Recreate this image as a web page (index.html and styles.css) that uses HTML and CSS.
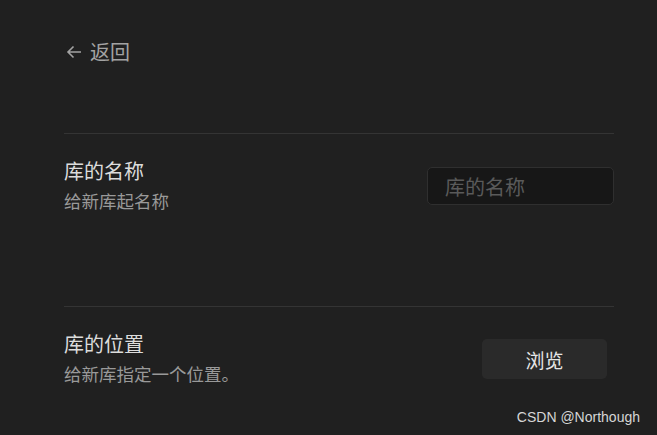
FILE: index.html
```html
<!DOCTYPE html>
<html lang="zh-CN">
<head>
<meta charset="utf-8"/>
<meta content="width=device-width, initial-scale=1.0" name="viewport"/>
<title>新建库</title>
<link rel="stylesheet" href="styles.css">
</head>
<body>
<main class="page">
<a class="back" href="#"><svg class="arrow" width="16" height="14" viewBox="0 0 16 14"><path d="M15 7H2M7.5 1.5L2 7l5.5 5.5" fill="none" stroke="currentColor" stroke-width="1.6"/></svg>返回</a>
<div class="settings">
<div class="setting-item">
<div class="info">
<div class="name">库的名称</div>
<div class="desc">给新库起名称</div>
</div>
<input class="text-input" placeholder="库的名称" type="text"/>
</div>
<div class="setting-item">
<div class="info">
<div class="name">库的位置</div>
<div class="desc">给新库指定一个位置。</div>
</div>
<button class="btn">浏览</button>
</div>
</div>
</main>
<div class="watermark">CSDN @Northough</div>
</body>
</html>
```

FILE: styles.css
```css
* {
  box-sizing: border-box;
}

body {
  margin: 0;
  padding: 0;
  background: #202020;
  color: #dadada;
  font-family: "Noto Sans CJK SC", "Noto Sans", sans-serif;
  width: 657px;
  height: 435px;
  overflow: hidden;
  position: relative;
}

.page {
  padding: 37px 43px 0 64px;
}

.back {
  display: inline-flex;
  align-items: center;
  gap: 8px;
  color: #a3a3a3;
  text-decoration: none;
  font-size: 20px;
  line-height: 30px;
}

.back .arrow {
  margin-left: 2px;
}

.settings {
  margin-top: 66px;
  display: flex;
  flex-direction: column;
  gap: 68px;
}

.setting-item {
  border-top: 1px solid #343434;
  padding: 22px 0;
  display: flex;
  justify-content: space-between;
  align-items: center;
}

.name {
  font-size: 20px;
  line-height: 30px;
  color: #dcdcdc;
}

.desc {
  font-size: 17.5px;
  line-height: 30px;
  color: #999;
}

.text-input {
  width: 187px;
  height: 38px;
  background: #171717;
  border: 1px solid #2f2f2f;
  border-radius: 5px;
  padding: 0 17px;
  font-family: inherit;
  font-size: 20px;
  color: #dadada;
  outline: none;
}

.text-input::placeholder {
  color: #5a5a5a;
}

.btn {
  width: 125px;
  height: 40px;
  margin-right: 7px;
  background: #2a2a2a;
  border: none;
  border-radius: 5px;
  color: #e6e6e6;
  font-family: inherit;
  font-size: 19px;
  cursor: pointer;
}

.watermark {
  position: absolute;
  right: 17px;
  bottom: 10px;
  font-family: "Liberation Sans", Arial, sans-serif;
  font-size: 14px;
  color: #d6d6d6;
}
```
